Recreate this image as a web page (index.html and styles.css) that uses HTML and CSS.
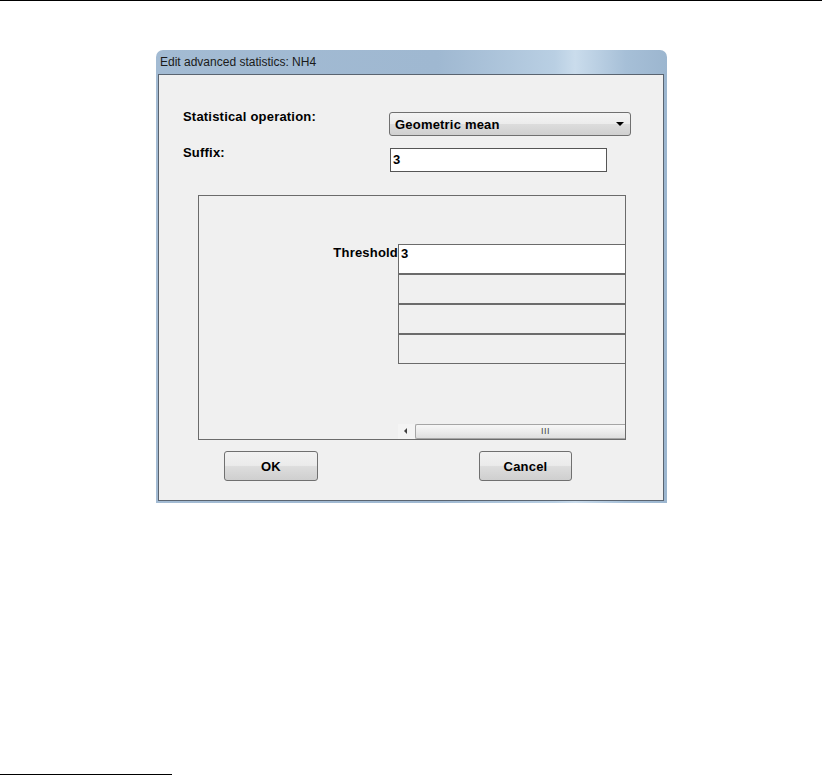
FILE: index.html
```html
<!DOCTYPE html>
<html lang="en">
<head>
  <meta charset="UTF-8">
  <title>Edit advanced statistics: NH4</title>
  <link rel="stylesheet" href="styles.css">
</head>
<body>
  <div class="top-rule"></div>

  <div class="window">
    <div class="title-bar">Edit advanced statistics: NH4</div>
    <div class="client">
      <div class="form-row first">
        <label class="form-label">Statistical operation:</label>
        <div class="combo">
          <span>Geometric mean</span>
          <span class="combo-arrow"></span>
        </div>
      </div>
      <div class="form-row">
        <label class="form-label">Suffix:</label>
        <div class="text-field">3</div>
      </div>

      <div class="scroll-pane">
        <div class="threshold-row">
          <span class="threshold-label">Threshold</span>
          <div class="threshold-table">
            <div class="cell active">3</div>
            <div class="cell"></div>
            <div class="cell"></div>
            <div class="cell last"></div>
          </div>
        </div>
        <div class="hscroll">
          <span class="scroll-arrow"></span>
          <div class="scroll-thumb"><span class="grip">III</span></div>
        </div>
      </div>

      <div class="button-row">
        <button class="dlg-button">OK</button>
        <button class="dlg-button cancel">Cancel</button>
      </div>
    </div>
  </div>

  <div class="bottom-rule"></div>
</body>
</html>
```

FILE: styles.css
```css
body {
  margin: 0;
  padding: 0;
  background: #fff;
  font-family: "Liberation Sans", Arial, sans-serif;
  color: #000;
}

.top-rule {
  height: 1px;
  background: #000;
}

.bottom-rule {
  width: 172px;
  height: 1px;
  margin-top: 271px;
  background: #000;
}

/* window frame */
.window {
  width: 511px;
  margin: 49px 0 0 156px;
  padding: 0 3px 2px 2px;
  box-sizing: border-box;
  border-radius: 7px 7px 0 0;
  background: linear-gradient(to right, #a3bbd3 0%, #9fb8d1 55%, #b9cfe3 78%, #cadcec 82%, #a6bfd7 92%, #9cb6cf 100%);
}

.title-bar {
  height: 24px;
  line-height: 24px;
  padding-left: 2px;
  font-size: 12px;
  color: #1a1a1a;
  white-space: nowrap;
}

.client {
  height: 427px;
  box-sizing: border-box;
  padding: 0 0 0 24px;
  background: #f0f0f0;
  border: 1px solid #5a6470;
}

/* top form */
.form-row {
  display: flex;
  align-items: flex-start;
  margin-top: 12px;
}

.form-row.first {
  margin-top: 37px;
}

.form-label {
  width: 206px;
  margin-top: -3px;
  font-size: 13px;
  font-weight: 700;
  line-height: 15px;
  letter-spacing: 0.2px;
}

.combo {
  display: flex;
  align-items: center;
  justify-content: space-between;
  width: 242px;
  height: 24px;
  box-sizing: border-box;
  padding: 0 5px 0 5px;
  border: 1px solid #707070;
  border-radius: 3px;
  background: linear-gradient(to bottom, #f4f4f4 0%, #ececec 48%, #dcdcdc 52%, #d0d0d0 100%);
  font-size: 13px;
  font-weight: 700;
  letter-spacing: 0.2px;
}

.combo-arrow {
  width: 0;
  height: 0;
  border-left: 4px solid transparent;
  border-right: 4px solid transparent;
  border-top: 4px solid #000;
  margin-right: 1px;
}

.text-field {
  width: 217px;
  height: 24px;
  box-sizing: border-box;
  margin-left: 1px;
  padding: 3px 2px 0;
  border: 1px solid #555;
  background: #fff;
  font-size: 13px;
  font-weight: 700;
  line-height: 15px;
}

/* scroll pane with threshold table */
.scroll-pane {
  display: flex;
  flex-direction: column;
  width: 428px;
  height: 245px;
  box-sizing: border-box;
  margin: 23px 0 0 15px;
  padding-top: 48px;
  border: 1px solid #6b6b6b;
  background: #f0f0f0;
}

.threshold-row {
  display: flex;
  justify-content: flex-end;
  align-items: flex-start;
}

.threshold-label {
  margin-top: 1px;
  font-size: 13px;
  font-weight: 700;
  line-height: 15px;
  letter-spacing: 0.2px;
}

.threshold-table {
  width: 227px;
  border-top: 1px solid #6b6b6b;
  border-left: 1px solid #6b6b6b;
  box-sizing: border-box;
}

.cell {
  height: 27px;
  padding: 1px 2px 0;
  border-bottom: 2px solid #6b6b6b;
  font-size: 13px;
  font-weight: 700;
  line-height: 15px;
}

.cell.active {
  background: #fff;
}

.cell.last {
  border-bottom-width: 1px;
}

.hscroll {
  display: flex;
  align-self: flex-end;
  width: 227px;
  height: 15px;
  margin-top: auto;
  background: #f4f4f4;
}

.scroll-arrow {
  position: relative;
  width: 17px;
  flex: none;
}

.scroll-arrow::before {
  content: "";
  position: absolute;
  left: 6px;
  top: 4px;
  border-top: 3px solid transparent;
  border-bottom: 3px solid transparent;
  border-right: 3px solid #404040;
}

.scroll-thumb {
  flex: 1;
  display: flex;
  align-items: center;
  justify-content: center;
  box-sizing: border-box;
  border: 1px solid #a5a5a5;
  border-right: none;
  border-radius: 2px 0 0 2px;
  background: linear-gradient(to bottom, #f7f7f7 0%, #ececec 50%, #dedede 100%);
}

.grip {
  margin-left: 50px;
  font-size: 9px;
  line-height: 9px;
  letter-spacing: 0.5px;
  color: #444;
}

/* buttons */
.button-row {
  display: flex;
  margin: 11px 0 0 41px;
}

.dlg-button {
  width: 94px;
  height: 30px;
  padding: 0;
  border: 1px solid #707070;
  border-radius: 3px;
  background: linear-gradient(to bottom, #f2f2f2 0%, #ebebeb 48%, #dddddd 52%, #cfcfcf 100%);
  font-family: "Liberation Sans", Arial, sans-serif;
  font-size: 13px;
  font-weight: 700;
  letter-spacing: 0.2px;
  color: #000;
}

.dlg-button.cancel {
  width: 93px;
  margin-left: 161px;
}
```
